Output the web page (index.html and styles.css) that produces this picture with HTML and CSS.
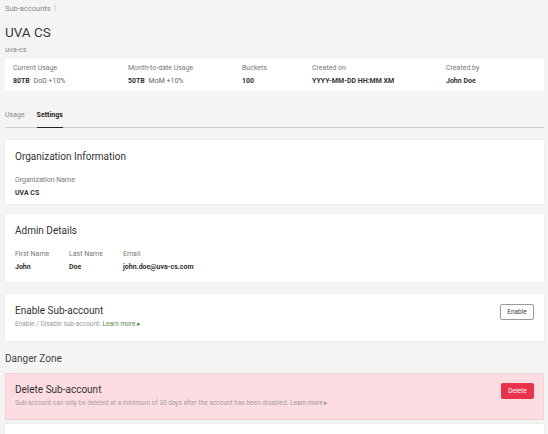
FILE: index.html
```html
<!DOCTYPE html>
<html lang="en">
<head>
    <meta charset="UTF-8">
    <meta name="viewport" content="width=device-width, initial-scale=1.0">
    <title>UVA CS - Settings</title>
    <link rel="stylesheet" href="styles.css">
</head>
<body>
    <div class="page">
        <div class="crumbs">Sub-accounts <span class="chev">〉</span></div>
        <h1 class="title">UVA CS</h1>
        <div class="subtitle">uva-cs</div>

        <div class="stats">
            <div class="stat s1">
                <div class="label">Current Usage</div>
                <div class="value">80TB <span class="delta">DoD +10%</span></div>
            </div>
            <div class="stat s2">
                <div class="label">Month-to-date Usage</div>
                <div class="value">50TB <span class="delta">MoM +10%</span></div>
            </div>
            <div class="stat s3">
                <div class="label">Buckets</div>
                <div class="value">100</div>
            </div>
            <div class="stat s4">
                <div class="label">Created on</div>
                <div class="value">YYYY-MM-DD HH:MM XM</div>
            </div>
            <div class="stat s5">
                <div class="label">Created by</div>
                <div class="value">John Doe</div>
            </div>
        </div>

        <div class="tabs">
            <div class="tab">Usage</div>
            <div class="tab active">Settings</div>
        </div>

        <div class="card org">
            <h2>Organization Information</h2>
            <div class="field">
                <div class="label">Organization Name</div>
                <div class="value">UVA CS</div>
            </div>
        </div>

        <div class="card admin">
            <h2>Admin Details</h2>
            <div class="fields">
                <div class="field f-first">
                    <div class="label">First Name</div>
                    <div class="value">John</div>
                </div>
                <div class="field f-last">
                    <div class="label">Last Name</div>
                    <div class="value">Doe</div>
                </div>
                <div class="field">
                    <div class="label">Email</div>
                    <div class="value">john.doe@uva-cs.com</div>
                </div>
            </div>
        </div>

        <div class="card action">
            <div>
                <h2>Enable Sub-account</h2>
                <div class="desc">Enable / Disable sub-account. <a class="more green">Learn more ▸</a></div>
            </div>
            <button class="btn outline">Enable</button>
        </div>

        <div class="zone">Danger Zone</div>

        <div class="card action danger">
            <div>
                <h2>Delete Sub-account</h2>
                <div class="desc">Sub-account can only be deleted at a minimum of 30 days after the account has been disabled. <a class="more">Learn more ▸</a></div>
            </div>
            <button class="btn red">Delete</button>
        </div>

        <div class="card tail"></div>
    </div>
</body>
</html>
```

FILE: styles.css
```css
body {
    margin: 0;
    background: #f4f4f4;
    font-family: Roboto, 'Liberation Sans', sans-serif;
    color: #333;
    overflow: hidden;
}

.page {
    padding: 4px 4px 0 5px;
}

.crumbs {
    font-size: 7.5px;
    color: #8a8a8a;
    line-height: 9px;
}

.chev {
    font-size: 7.5px;
}

.title {
    font-size: 13.5px;
    font-weight: 400;
    margin: 11px 0 0;
    line-height: 16px;
    color: #3a3a3a;
}

.subtitle {
    font-size: 7.5px;
    color: #8a8a8a;
    margin-top: 5px;
    line-height: 9px;
}

.stats {
    background: #fff;
    margin-top: 5px;
    height: 32px;
    display: flex;
    padding: 0 8px;
    box-sizing: border-box;
    align-items: center;
}

.stat .label {
    font-size: 7px;
    color: #777;
    line-height: 9px;
}

.stat .value {
    font-size: 7px;
    font-weight: 700;
    color: #333;
    line-height: 9px;
    margin-top: 4px;
}

.delta {
    font-weight: 400;
    color: #666;
    margin-left: 2px;
}

.s1 { width: 115px; }
.s2 { width: 114px; }
.s3 { width: 70px; }
.s4 { width: 134px; }

.tabs {
    display: flex;
    margin-top: 20px;
    border-bottom: 1px solid #cfcfcf;
}

.tab {
    font-size: 7px;
    color: #888;
    padding-bottom: 7px;
    margin-right: 12px;
    line-height: 9px;
}

.tab.active {
    color: #222;
    font-weight: 700;
    border-bottom: 1px solid #222;
    margin-bottom: -1px;
}

.card {
    background: #fff;
    box-shadow: 0 0 3px rgba(0, 0, 0, 0.06);
    padding: 0 10px;
    margin-top: 10px;
}

.card h2 {
    font-size: 10px;
    font-weight: 400;
    color: #333;
    margin: 0;
    line-height: 12px;
}

.card .label {
    font-size: 7px;
    color: #777;
    line-height: 9px;
}

.card .value {
    font-size: 7px;
    font-weight: 700;
    color: #333;
    line-height: 9px;
    margin-top: 4px;
}

.org {
    margin-top: 12px;
    padding-top: 11px;
    height: 53px;
}

.org .field {
    margin-top: 13px;
}

.admin {
    padding-top: 11px;
    height: 57px;
}

.fields {
    display: flex;
    margin-top: 13px;
}

.f-first { width: 54px; }
.f-last { width: 54px; }

.action {
    display: flex;
    justify-content: space-between;
    align-items: flex-start;
    margin-top: 12px;
    padding-top: 11px;
    height: 36px;
}

.desc {
    font-size: 6.5px;
    color: #999;
    margin-top: 3px;
    line-height: 9px;
}

.more {
    color: #999;
}

.more.green {
    color: #5f8a52;
}

.btn {
    font-family: Roboto, 'Liberation Sans', sans-serif;
    font-size: 6.5px;
    height: 16px;
    width: 34px;
    padding: 0;
    border-radius: 2px;
    margin-top: -1px;
}

.outline {
    background: #fff;
    color: #444;
    border: 1px solid #999;
}

.red {
    background: #e8344a;
    color: #fff;
    border: none;
    width: 33px;
    margin-top: -1px;
}

.zone {
    font-size: 10px;
    color: #444;
    margin-top: 12px;
    line-height: 12px;
}

.danger {
    background: #fddde1;
    border: 1px solid #f6cfd3;
    box-shadow: none;
    margin-top: 8px;
    padding: 10px 9px 0;
    height: 35px;
}

.danger .desc {
    color: #a9a0a2;
}

.tail {
    margin-top: 4px;
    height: 20px;
}
```
